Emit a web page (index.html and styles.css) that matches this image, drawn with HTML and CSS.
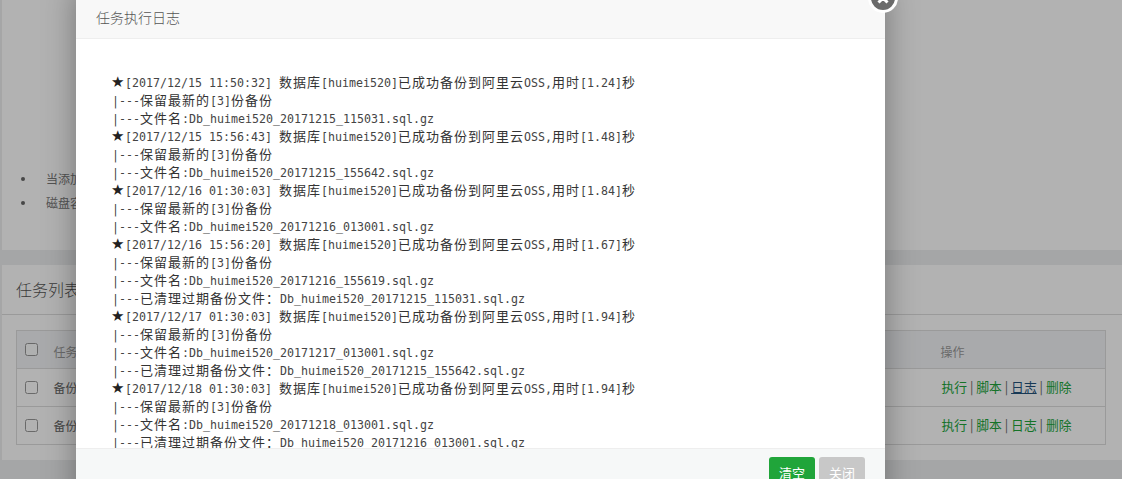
FILE: index.html
```html
<!DOCTYPE html>
<html lang="zh">
<head>
<meta charset="utf-8">
<title>任务执行日志</title>
<link rel="stylesheet" href="styles.css">
</head>
<body>
<div class="page">
  <section class="panel notes">
    <ul class="tips">
      <li>当添加任务后请及时执行</li>
      <li>磁盘容量不足时请清理备份</li>
    </ul>
  </section>
  <section class="panel tasks">
    <h2 class="panel-title">任务列表</h2>
    <div class="table-wrap">
      <table class="task-table">
        <colgroup><col class="col-check"><col class="col-name"><col class="col-ops"></colgroup>
        <thead>
          <tr><th><input type="checkbox"></th><th>任务名称</th><th>操作</th></tr>
        </thead>
        <tbody>
          <tr>
            <td><input type="checkbox"></td><td>备份数据库</td>
            <td><a href="#">执行</a> | <a href="#">脚本</a> | <a href="#" class="active">日志</a> | <a href="#">删除</a></td>
          </tr>
          <tr>
            <td><input type="checkbox"></td><td>备份网站</td>
            <td><a href="#">执行</a> | <a href="#">脚本</a> | <a href="#">日志</a> | <a href="#">删除</a></td>
          </tr>
        </tbody>
      </table>
    </div>
  </section>
</div>
<div class="shade"></div>
<div class="modal">
  <span class="close"><svg viewBox="0 0 20 20" width="20" height="20"><path d="M5.500 5.500l9 9M14.500 5.500l-9 9" stroke="#fff" stroke-width="3" fill="none"/></svg></span>
  <header class="modal-head">任务执行日志</header>
  <div class="log">
    <div><span class="s">★</span>[2017/12/15 11:50:32] <span class="c">数据库</span>[huimei520]<span class="c">已成功备份到阿里云</span>OSS,<span class="c">用时</span>[1.24]<span class="c">秒</span></div>
    <div>|---<span class="c">保留最新的</span>[3]<span class="c">份备份</span></div>
    <div>|---<span class="c">文件名</span>:Db_huimei520_20171215_115031.sql.gz</div>
    <div><span class="s">★</span>[2017/12/15 15:56:43] <span class="c">数据库</span>[huimei520]<span class="c">已成功备份到阿里云</span>OSS,<span class="c">用时</span>[1.48]<span class="c">秒</span></div>
    <div>|---<span class="c">保留最新的</span>[3]<span class="c">份备份</span></div>
    <div>|---<span class="c">文件名</span>:Db_huimei520_20171215_155642.sql.gz</div>
    <div><span class="s">★</span>[2017/12/16 01:30:03] <span class="c">数据库</span>[huimei520]<span class="c">已成功备份到阿里云</span>OSS,<span class="c">用时</span>[1.84]<span class="c">秒</span></div>
    <div>|---<span class="c">保留最新的</span>[3]<span class="c">份备份</span></div>
    <div>|---<span class="c">文件名</span>:Db_huimei520_20171216_013001.sql.gz</div>
    <div><span class="s">★</span>[2017/12/16 15:56:20] <span class="c">数据库</span>[huimei520]<span class="c">已成功备份到阿里云</span>OSS,<span class="c">用时</span>[1.67]<span class="c">秒</span></div>
    <div>|---<span class="c">保留最新的</span>[3]<span class="c">份备份</span></div>
    <div>|---<span class="c">文件名</span>:Db_huimei520_20171216_155619.sql.gz</div>
    <div>|---<span class="c">已清理过期备份文件：</span>Db_huimei520_20171215_115031.sql.gz</div>
    <div><span class="s">★</span>[2017/12/17 01:30:03] <span class="c">数据库</span>[huimei520]<span class="c">已成功备份到阿里云</span>OSS,<span class="c">用时</span>[1.94]<span class="c">秒</span></div>
    <div>|---<span class="c">保留最新的</span>[3]<span class="c">份备份</span></div>
    <div>|---<span class="c">文件名</span>:Db_huimei520_20171217_013001.sql.gz</div>
    <div>|---<span class="c">已清理过期备份文件：</span>Db_huimei520_20171215_155642.sql.gz</div>
    <div><span class="s">★</span>[2017/12/18 01:30:03] <span class="c">数据库</span>[huimei520]<span class="c">已成功备份到阿里云</span>OSS,<span class="c">用时</span>[1.94]<span class="c">秒</span></div>
    <div>|---<span class="c">保留最新的</span>[3]<span class="c">份备份</span></div>
    <div>|---<span class="c">文件名</span>:Db_huimei520_20171218_013001.sql.gz</div>
    <div>|---<span class="c">已清理过期备份文件：</span>Db_huimei520_20171216_013001.sql.gz</div>
  </div>
  <footer class="modal-foot">
    <button class="btn btn-green">清空</button>
    <button class="btn btn-grey">关闭</button>
  </footer>
</div>
</body>
</html>
```
FILE: styles.css
```css
html, body {
  margin: 0;
  height: 479px;
  overflow: hidden;
}
body {
  position: relative;
  background: #eceef0;
  font-family: "Noto Sans CJK SC", "Noto Sans", sans-serif;
  color: #555;
  font-size: 12px;
}
.page {
  display: flex;
  flex-direction: column;
  gap: 15px;
  padding-left: 1px;
}
.panel {
  background: #fff;
  border: 1px solid #eee;
  border-width: 0 0 0 1px;
}
.notes {
  height: 250px;
  box-sizing: border-box;
  padding-top: 167px;
}
.tips {
  margin: 0;
  padding-left: 19px;
  list-style: none;
}
.tips li {
  display: flex;
  align-items: center;
  gap: 21px;
  height: 24px;
  line-height: 24px;
  color: #777;
}
.tips li::before {
  content: "";
  width: 4px;
  height: 4px;
  border-radius: 50%;
  background: #666;
}
.tasks {
  height: 195px;
  box-sizing: border-box;
}
.panel-title {
  margin: 0;
  height: 50px;
  box-sizing: border-box;
  padding-left: 14px;
  line-height: 48px;
  font-size: 16px;
  font-weight: 300;
  color: #555;
  border-bottom: 1px solid #ddd;
}
.table-wrap {
  padding: 15px 16px 0 14px;
}
.task-table {
  width: 100%;
  table-layout: fixed;
  border-collapse: collapse;
  border: 1px solid #ddd;
}
.col-check { width: 37px; }
.col-ops { width: 165px; }
.task-table th, .task-table td {
  height: 38px;
  box-sizing: border-box;
  padding: 0;
  border-bottom: 1px solid #ddd;
  text-align: left;
  font-weight: 400;
}
.task-table th { background: #f2f4f7; color: #999; padding-top: 3px; }
.task-table td { color: #666; }
.task-table th:first-child, .task-table td:first-child { padding: 0 0 0 8px; }
.task-table th:first-child input { margin-top: -1px; }
.task-table input { margin: 0; width: 13px; height: 13px; display: block; opacity: .75; }
.task-table td:last-child { font-size: 12.8px; padding: 0 0 2px 1px; }
.task-table a { color: #20a53a; text-decoration: none; }
.task-table a.active { color: #23527c; text-decoration: underline; }
.shade {
  position: absolute;
  inset: 0;
  background: rgba(0, 0, 0, .3);
}
.modal {
  position: absolute;
  left: 76px;
  top: -12px;
  width: 809px;
  height: 520px;
  display: flex;
  flex-direction: column;
  background: #fff;
  box-shadow: 0 0 30px rgba(0, 0, 0, .35);
}
.modal-head {
  height: 51px;
  box-sizing: border-box;
  flex: none;
  padding: 12px 0 0 20px;
  line-height: 35px;
  font-size: 14px;
  font-weight: 300;
  color: #555;
  background: #f8f8f8;
  border-bottom: 1px solid #eee;
}
.close {
  position: absolute;
  right: -13px;
  top: -5px;
  width: 24px;
  height: 24px;
  border: 3px solid #fff;
  border-radius: 50%;
  background: #6b6b6b;
  display: flex;
  align-items: center;
  justify-content: center;
}
.log {
  flex: none;
  height: 409px;
  box-sizing: border-box;
  padding: 34px 0 0 36px;
  overflow: hidden;
  font-family: "DejaVu Sans Mono", monospace;
  font-size: 11.63px;
  line-height: 18px;
  color: #444;
}
.log div {
  height: 18px;
  white-space: pre;
}
.c {
  font-family: "Noto Sans CJK SC", sans-serif;
  font-size: 13px;
  letter-spacing: 1px;
  line-height: 18px;
  color: #333;
}
.s {
  display: inline-block;
  width: 13px;
  margin-left: -1px;
  margin-right: 1px;
  font-family: "DejaVu Sans", sans-serif;
  font-size: 15px;
  line-height: 18px;
  color: #222;
}
.modal-foot {
  flex: 1;
  display: flex;
  justify-content: flex-end;
  align-items: flex-start;
  gap: 4px;
  padding: 8px 20px 0 0;
  background: #f6f8f8;
  border-top: 1px solid #eee;
}
.btn {
  width: 46px;
  height: 30px;
  padding: 0;
  border: 0;
  border-radius: 3px;
  font: 13px "Noto Sans CJK SC", sans-serif;
  color: #fff;
}
.btn-green { background: #20a53a; }
.btn-grey { background: #c8c8c8; }
```
